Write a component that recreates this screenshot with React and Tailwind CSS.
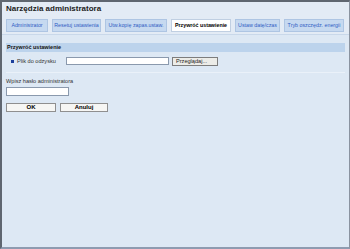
export default function App() {
  const tabs = [
    { label: "Administrator", w: 42 },
    { label: "Resetuj ustawienia", w: 49 },
    { label: "Utw.kopię zapas.ustaw.", w: 62 },
    { label: "Przywróć ustawienie", w: 60, active: true },
    { label: "Ustaw datę/czas", w: 45 },
    { label: "Tryb oszczędz. energii", w: 60 },
  ];
  return (
    <div
      className="w-[350px] h-[249px] overflow-hidden bg-[#dde8f4] border-t-2 border-l-2 border-r border-b-2 border-t-[#5f6670] border-l-[#5f6670] border-r-[#8a93a0] border-b-[#8e9bb0] flex flex-col"
      style={{ fontFamily: '"Liberation Sans", Arial, sans-serif' }}
    >
      <div className="bg-[#e3ebf5] pt-[1px] pl-[4px] h-[14px]">
        <div className="text-[8px] leading-[12px] font-bold text-[#222]">Narzędzia administratora</div>
      </div>
      <div className="bg-[#e3ebf5] flex gap-[4px] pl-[4px] pt-[3px] pb-[2px] border-b border-[#c9d8ea]">
        {tabs.map((t) => (
          <div
            key={t.label}
            style={{ width: t.w }}
            className={
              "h-[13px] flex items-center justify-center text-[5.3px] leading-none whitespace-nowrap border " +
              (t.active
                ? "bg-white border-[#c0cfe2] text-black font-bold"
                : "bg-[#c6d9f0] border-[#aec5e3] text-[#2f5cc4]")
            }
          >
            {t.label}
          </div>
        ))}
      </div>
      <div className="bg-[#dde8f4] px-[4px] pt-[8px] flex flex-col">
        <div className="h-[9px] bg-[#bcd3ec] flex items-center pl-[1px] text-[5.5px] font-bold text-[#111]">
          Przywróć ustawienie
        </div>
        <div className="flex items-center h-[16px] pt-[2px]">
          <div className="w-[3px] h-[3px] bg-[#1c3f9c] ml-[5px] mr-[3px]" />
          <div className="text-[5.6px] text-[#333] w-[49px]">Plik do odzysku</div>
          <div className="w-[103px] h-[8px] bg-white border border-[#8a99ad]" />
          <div className="ml-[3px] w-[46px] h-[9px] bg-[#ecece8] border border-[#7d7d7d] flex items-center pl-[3px] text-[5.6px] text-[#222]">
            Przeglądaj...
          </div>
        </div>
        <div className="h-[1px] bg-[#eaf1f9] mt-[4px]" />
        <div className="text-[5.6px] text-[#333] mt-[5px] leading-[7px]">Wpisz hasło administratora</div>
        <div className="w-[63px] h-[9px] bg-white border border-[#8a99ad] mt-[2px]" />
        <div className="flex gap-[4px] mt-[7px]">
          <div className="w-[50px] h-[9px] bg-[#f6f6f4] border border-[#8f8f8f] flex items-center justify-center text-[6px] font-bold text-black">
            OK
          </div>
          <div className="w-[48px] h-[9px] bg-[#f6f6f4] border border-[#8f8f8f] flex items-center justify-center text-[6px] font-bold text-black">
            Anuluj
          </div>
        </div>
      </div>
    </div>
  );
}
